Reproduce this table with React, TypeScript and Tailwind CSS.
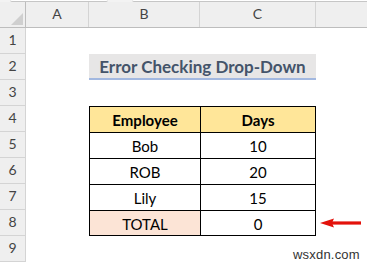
const font = { fontFamily: 'Lato, "Open Sans", sans-serif' };

const rowHead =
    'flex w-[26px] shrink-0 items-end justify-center border-r border-b border-[#d4d4d4] bg-[#efefef] pb-[3px] text-[14px] text-[#444]';

function RedArrow() {
    return (
        <svg width="42" height="12" viewBox="0 0 42 12" className="ml-[4px]">
            <path d="M12 4.4 H41 V7.6 H12 Z" fill="#e3120b" />
            <path d="M0 6 L14 1.5 L12 6 L14 10.5 Z" fill="#e3120b" />
        </svg>
    );
}

export default function App() {
    const rows = [1, 2, 3, 4, 5, 6, 7, 8, 9];
    const data: Record<number, [string, string]> = {
        5: ['Bob', '10'],
        6: ['ROB', '20'],
        7: ['Lily', '15'],
    };

    return (
        <div className="relative h-[264px] w-[367px] overflow-hidden bg-white" style={font}>
            {/* formula bar edge */}
            <div className="flex h-[2px] bg-[#f3f3f3]">
                <div className="ml-[10px] w-[98px] rounded-b-[2px] border-b border-[#c6c6c6] bg-white" />
                <div className="ml-[24px] flex-1 rounded-bl-[2px] border-b border-[#c6c6c6] bg-white" />
            </div>

            {/* column headers */}
            <div className="flex h-[26px] border-b border-[#bdbdbd] bg-[#efefef] text-[14px] text-[#444]">
                <div className="relative w-[26px] shrink-0 border-r border-[#bdbdbd]">
                    <div
                        className="absolute right-[2px] bottom-[2px] h-[12px] w-[12px] bg-[#cfcfcf]"
                        style={{ clipPath: 'polygon(100% 0, 100% 100%, 0 100%)' }}
                    />
                </div>
                <div className="flex w-[63px] shrink-0 items-end justify-center border-r border-[#d4d4d4] pb-[3px]">A</div>
                <div className="flex w-[111px] shrink-0 items-end justify-center border-r border-[#d4d4d4] pb-[3px]">B</div>
                <div className="flex w-[116px] shrink-0 items-end justify-center border-r border-[#d4d4d4] pb-[3px]">C</div>
                <div className="flex-1" />
            </div>

            {rows.map((r) => {
                const inTable = r >= 4 && r <= 8;
                return (
                    <div key={r} className="flex h-[26px]">
                        <div className={rowHead}>{r}</div>
                        <div className="w-[63px] shrink-0" />
                        {r === 2 && (
                            <div className="flex w-[227px] shrink-0 items-center justify-center border-b-2 border-[#a2b8e0] bg-[#e7e6e6] pt-[1px] text-[17px] font-bold text-[#44546a]">
                                Error Checking Drop-Down
                            </div>
                        )}
                        {inTable && (
                            <>
                                <div
                                    className={`flex w-[111px] shrink-0 items-center justify-center border-t border-l border-black pt-[2px] text-[15px] text-black ${
                                        r === 8 ? 'border-b bg-[#fce4d6]' : ''
                                    } ${r === 4 ? 'bg-[#ffe699] font-bold' : ''}`}
                                >
                                    {r === 4 ? 'Employee' : r === 8 ? 'TOTAL' : data[r][0]}
                                </div>
                                <div
                                    className={`flex w-[116px] shrink-0 items-center justify-center border-t border-r border-l border-black pt-[2px] text-[15px] text-black ${
                                        r === 8 ? 'border-b' : ''
                                    } ${r === 4 ? 'bg-[#ffe699] font-bold' : ''}`}
                                >
                                    {r === 4 ? 'Days' : r === 8 ? '0' : data[r][1]}
                                </div>
                            </>
                        )}
                        {r === 8 && (
                            <div className="flex flex-1 items-center">
                                <RedArrow />
                            </div>
                        )}
                    </div>
                );
            })}

            <div
                className="absolute top-[245px] left-[293px] text-[13px] tracking-[0.2px] text-[#333]"
                style={{ fontFamily: '"Liberation Sans", Arial, sans-serif' }}
            >
                wsxdn.com
            </div>
        </div>
    );
}
